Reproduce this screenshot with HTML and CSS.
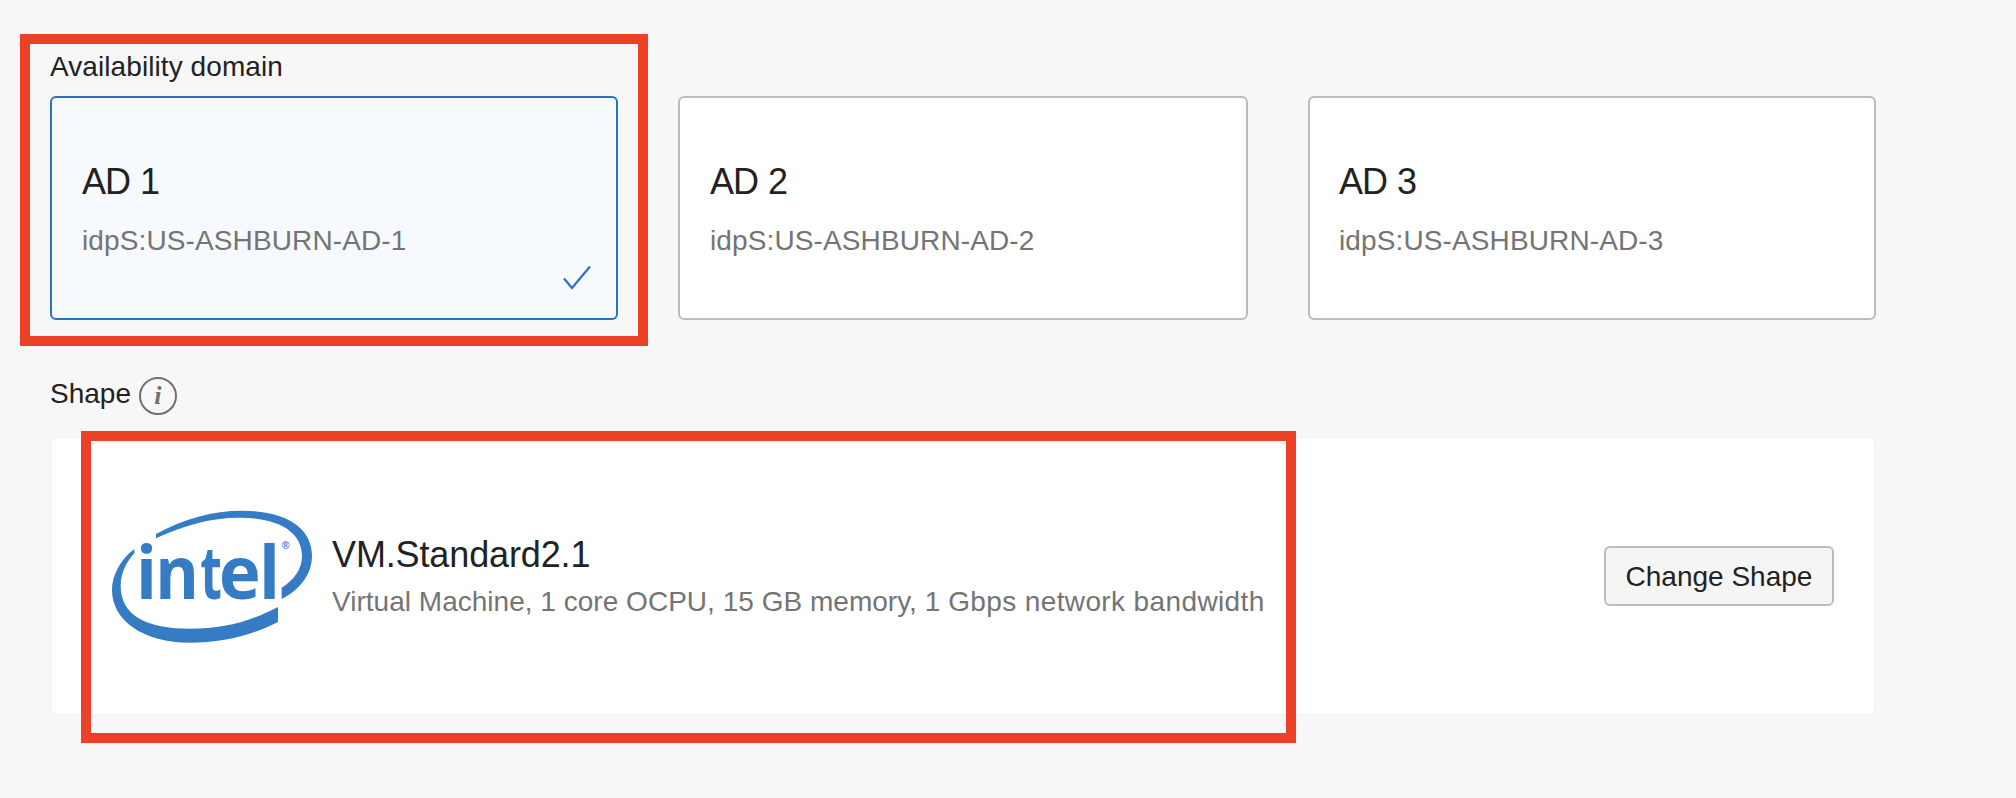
FILE: index.html
```html
<!DOCTYPE html>
<html lang="en">
<head>
<meta charset="utf-8">
<title>Create Compute Instance</title>
<link rel="stylesheet" href="styles.css">
</head>
<body>
<main class="page">
  <h2 class="label label-domain">Availability domain</h2>
  <div class="cards">
    <div class="card selected">
      <div class="title">AD 1</div>
      <div class="sub">idpS:US-ASHBURN-AD-1</div>
      <svg class="check" viewBox="0 0 28 24"><path d="M1 12.500 9 22 27 .5"/></svg>
    </div>
    <div class="card">
      <div class="title">AD 2</div>
      <div class="sub">idpS:US-ASHBURN-AD-2</div>
    </div>
    <div class="card card-last">
      <div class="title">AD 3</div>
      <div class="sub">idpS:US-ASHBURN-AD-3</div>
    </div>
  </div>
  <h2 class="label label-shape"><span class="shape-name">Shape</span><span class="info">i</span></h2>
  <section class="panel">
    <svg class="logo" viewBox="36 58 600 399">
      <path d="M168 130C250 84 340 60 425 60C560 60 636 112 636 195C636 250 600 297 545 325L545 291C582 269 606 235 606 197C606 125 540 81 415 81C335 81 250 104 168 143Z"/>
      <path d="M103 175C60 208 36 255 36 298C36 390 130 456 270 456C370 456 460 432 534 394L534 349C450 393 370 414 270 414C140 414 62 375 62 285C62 250 78 215 103 188Z"/>
      <text class="brand" y="325"><tspan x="108" textLength="63" lengthAdjust="spacingAndGlyphs">i</tspan><tspan x="166" textLength="131" lengthAdjust="spacingAndGlyphs">n</tspan><tspan x="301" textLength="65" lengthAdjust="spacingAndGlyphs">t</tspan><tspan x="356" textLength="126" lengthAdjust="spacingAndGlyphs">e</tspan><tspan x="477" textLength="63" lengthAdjust="spacingAndGlyphs">l</tspan></text>
      <text class="reg" x="545" y="176">®</text>
    </svg>
    <div class="shape-text">
      <div class="title">VM.Standard2.1</div>
      <div class="sub">Virtual Machine, 1 core OCPU, 15 GB memory, 1 <span class="network">Gbps network bandwidth</span></div>
    </div>
    <button class="change">Change Shape</button>
  </section>
</main>
<div class="mark mark-domain"></div>
<div class="mark mark-shape"></div>
</body>
</html>
```
FILE: styles.css
```css
* { box-sizing: border-box; }
body {
  margin: 0;
  height: 798px;
  overflow: hidden;
  background: #f7f7f7;
  color: #222;
  font-family: "Liberation Sans", Arial, sans-serif;
  font-size: 28px;
}
.page { width: 1876px; padding: 51px 0 0 50px; }
.label { margin: 0; font-size: 28px; font-weight: 400; line-height: 32px; letter-spacing: .08px; }
.label-domain { margin-bottom: 13px; }
.label-shape { display: flex; align-items: flex-start; gap: 8px; height: 38px; margin: 57px 0 21px; letter-spacing: 0; }
.shape-name { padding-top: 1px; }
.cards { display: grid; grid-template-columns: 568px 570px 568px; gap: 60px; }
.card {
  position: relative;
  height: 224px;
  padding: 64px 30px 0;
  background: #fff;
  border: 2px solid #b8bcc3;
  border-radius: 6px;
}
.card.selected { background: #f6f9fe; border-color: #2a72c8; }
.card-last { padding-left: 29px; }
.title { font-size: 36px; line-height: 40px; white-space: nowrap; }
.sub { color: #747474; line-height: 32px; white-space: nowrap; }
.card .title { letter-spacing: -.9px; word-spacing: .8px; }
.card .sub { margin-top: 23px; letter-spacing: .12px; }
.check {
  position: absolute;
  right: 25px;
  bottom: 28px;
  width: 28px;
  height: 24px;
  overflow: visible;
  fill: none;
  stroke: #2a72c8;
  stroke-width: 2.2;
}
.info {
  display: flex;
  justify-content: center;
  width: 38px;
  height: 38px;
  border: 2px solid #707070;
  border-radius: 50%;
  color: #707070;
  font: italic bold 26px/33px "Liberation Serif", serif;
}
.panel {
  display: flex;
  align-items: center;
  height: 280px;
  padding: 0 40px 0 60px;
  background: #fff;
  border: 2px solid #f5f5f5;
  border-radius: 6px;
}
.logo { flex: none; width: 200px; height: 133px; fill: #367cc4; }
.brand { font: 700 223px "Open Sans", sans-serif; }
.reg { font: 700 32px "Liberation Sans", sans-serif; }
.shape-text { margin-left: 20px; }
.shape-text .title { padding-top: 1px; letter-spacing: -.13px; }
.shape-text .sub { margin-top: 11px; letter-spacing: .02px; }
.shape-text .network { letter-spacing: .38px; }
.change {
  width: 230px;
  height: 60px;
  margin-left: auto;
  padding: 1px 0 0;
  background: #f5f5f5;
  border: 2px solid #b8bcc3;
  border-radius: 6px;
  color: #222;
  font: 28px "Liberation Sans", Arial, sans-serif;
  white-space: nowrap;
}
.mark { position: absolute; border: 10px solid #ec4027; pointer-events: none; }
.mark-domain { left: 20px; top: 34px; width: 628px; height: 312px; }
.mark-shape { left: 81px; top: 431px; width: 1215px; height: 312px; }
```
